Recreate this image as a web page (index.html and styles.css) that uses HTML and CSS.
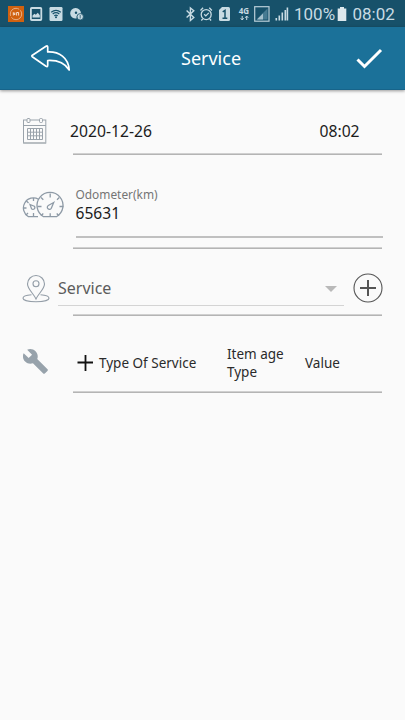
FILE: index.html
```html
<!DOCTYPE html>
<html lang="en">
<head>
<meta charset="utf-8">
<title>Service</title>
<link rel="stylesheet" href="styles.css">
</head>
<body>
<div class="status">
  <svg class="status-left" width="90" height="27" viewBox="0 0 90 27">
    <rect x="8" y="6" width="16" height="16" fill="#d0610f"/>
    <circle cx="16" cy="14" r="5.7" fill="none" stroke="#e6ad83" stroke-width="1" stroke-dasharray="14 1.5"/>
    <path d="M13.3 15.5v-3l1.500 2.500v-2.500M16.600 15.500v-3h2v3" fill="none" stroke="#f5dccb" stroke-width="1"/>
    <rect x="30.900" y="8" width="10.400" height="12" rx=".8" fill="none" stroke="#c8dbe3" stroke-width="1.800"/>
    <path d="M32.500 17.500v-2l2-1.800 1.300 1 2-2 2 2.500v2.300z" fill="#c8dbe3"/>
    <rect x="49.500" y="7" width="13" height="14" rx="1.200" fill="#c8dbe3"/>
    <path d="M51.200 12.200q4.800-3.800 9.600 0M52.700 14q3.300-2.600 6.600 0M54.300 15.800q1.700-1.300 3.400 0" fill="none" stroke="#17516a" stroke-width="1.200"/>
    <circle cx="56" cy="17.300" r="1" fill="#17516a"/>
    <path d="M75.500 8a5.300 5.300 0 1 0 1 10.500l.5-3 4-1.700A5.300 5.300 0 0 0 75.500 8z" fill="#c8dbe3"/>
    <circle cx="76" cy="12.700" r="1.200" fill="#17516a"/>
    <circle cx="80.200" cy="16.800" r="3.200" fill="#c8dbe3" stroke="#17516a" stroke-width=".8"/>
    <path d="M80.200 15v3.500" fill="none" stroke="#477387" stroke-width="1"/>
  </svg>
  <svg class="status-right" width="108" height="27" viewBox="184 0 108 27">
    <path d="M186.600 10.600l7.200 6.800-3.400 3V8l3.400 2.800-7.200 6.800" fill="none" stroke="#c8dbe3" stroke-width="1.400"/>
    <g fill="none" stroke="#c8dbe3" stroke-width="1.300">
      <circle cx="206.200" cy="14.600" r="5"/>
      <path d="M200.500 10.500l2.600-2.700M211.900 10.500l-2.600-2.700M202.700 19l-1.400 1.500M209.700 19l1.400 1.500M204.200 14.200l1.600 1.700 3-3"/>
    </g>
    <path d="M222 7h6.500q1.500 0 1.500 1.500v11q0 1.500-1.500 1.500h-8q-1.500 0-1.500-1.500V10z" fill="#c8dbe3"/>
    <path d="M222.700 11.800l2.300-1.400v7.800M222.500 18.200h4.800" fill="none" stroke="#17516a" stroke-width="1.500"/>
    <text class="net" x="238.700" y="13.900">4G</text>
    <path d="M242.200 16v4M240.700 18.200l1.500 1.800 1.500-1.800M246.700 20v-4M245.200 17.800l1.500-1.800 1.500 1.800" fill="none" stroke="#c8dbe3" stroke-width="1"/>
    <rect x="254.700" y="6.700" width="14.300" height="14.500" fill="none" stroke="#b9cfd9" stroke-width="1.200"/>
    <path d="M256.500 19.500L267.500 8.500v11z" fill="#477b92"/>
    <path d="M257 19.500l6-6v6z" fill="#a6c1cd"/>
    <path d="M276.300 20.500v-2.500M279.300 20.500v-5M282.300 20.500v-8M285.300 20.500v-10.500M287.400 20.500V7.500" fill="none" stroke="#c8dbe3" stroke-width="1.600"/>
  </svg>
  <span class="percent">100%</span>
  <svg class="battery" width="10" height="15" viewBox="0 0 10 15"><path d="M3 0h4v1.500h2.300V14H.7V1.500H3z" fill="#dce8ed"/></svg>
  <span class="clock">08:02</span>
</div>
<header class="bar">
  <svg class="back" width="42" height="32" viewBox="0 0 42 32"><path d="M2 13.500L16 4.200q1.700-1 1.700 1V10C29 9.500 38.500 15.500 39.200 28 34.500 20.500 28 18 17.700 18.500v4.800q0 2-1.700 1L2.300 14.700q-.8-.6-.3-1.200z" fill="none" stroke="#fff" stroke-width="1.700" stroke-linejoin="round"/></svg>
  <h1 class="title">Service</h1>
  <svg class="check" width="30" height="24" viewBox="0 0 30 24"><path d="M3.500 13.500l7 7L27 4" fill="none" stroke="#fff" stroke-width="3"/></svg>
</header>
<main>
  <section class="row date-row">
    <svg class="icon" width="28" height="30" viewBox="0 0 28 30" fill="none" stroke="#9aa3ab" stroke-width="1">
      <rect x="1.500" y="4" width="22.300" height="23"/><path d="M1.500 9.500h22.300"/><path d="M1.500 27h22.500" stroke="#b0b6bb" stroke-width="1.400"/>
      <rect x="5" y="2.500" width="3" height="4" rx="1" fill="#fafafa"/><rect x="17.500" y="2.500" width="3" height="4" rx="1" fill="#fafafa"/>
      <path d="M5.500 12.500h15v11h-15zM5.500 16.200h15M5.500 19.800h15M8.500 12.500v11M11.500 12.500v11M14.500 12.500v11M17.500 12.500v11"/>
    </svg>
    <span class="date">2020-12-26</span><span class="time">08:02</span>
  </section>
  <section class="row odo-row">
    <svg class="icon" width="44" height="30" viewBox="0 0 44 30" fill="none" stroke="#8e9aa6" stroke-width="1.300">
      <path d="M16.500 8.200A9.800 9.800 0 1 0 6.500 25.700H16"/>
      <path d="M21.500 25.700A13 13 0 1 1 34.500 25.700z"/>
      <path d="M11.500 7v3M4.500 10l2 2M1.500 17h3M4 24l2-2M11.500 25v-3M28.200 2.500v4M19 6.500l2.300 2.300M15.500 15.500h4M37.500 15.500h4M37.300 6.500L35 8.800M19 24.800l2.300-2.300M37 24.800l-2.300-2.300M28.200 25.500v-3.300"/>
      <path d="M8 13.500l4.300 1.700a1.900 1.900 0 1 1-2.700 2.700zM31.700 11.500l-5.400 3a2.100 2.100 0 1 0 3 2.700z"/>
    </svg>
    <div class="odo-field"><label class="odo-label">Odometer(km)</label><div class="odo-value">65631</div></div>
  </section>
  <section class="row place-row">
    <svg class="icon" width="28" height="30" viewBox="0 0 28 30" fill="none" stroke="#939da7" stroke-width="1.100">
      <path d="M14 25C11.500 19.500 5.500 15 5.500 10a8.500 8.500 0 0 1 17 0c0 5-6 9.500-8.500 15z"/><circle cx="14" cy="9.800" r="3"/>
      <path d="M9.500 20.800C4.500 21.200 1 22.600 1 24.200c0 2 5.800 3.500 13 3.500s13-1.500 13-3.500c0-1.600-3.500-3-8.500-3.400"/>
    </svg>
    <div class="select"><span>Service</span><svg width="12" height="6" viewBox="0 0 12 6"><path d="M0 0h12L6 6z" fill="#b9b9b9"/></svg></div>
    <svg class="add" width="30" height="30" viewBox="0 0 30 30" fill="none" stroke="#555"><circle cx="15" cy="15" r="14" stroke-width="1.100"/><path d="M15 7v16M7 15h16" stroke-width="2"/></svg>
  </section>
  <section class="row type-row">
    <svg class="icon" width="26" height="26" viewBox="1 1 23 23"><path fill="#97a2ab" d="M22.700 19l-9.100-9.100c.9-2.300.4-5-1.500-6.900-2-2-5-2.400-7.400-1.300L9 6 6 9 1.600 4.700C.4 7.100.9 10.100 2.900 12.100c1.900 1.900 4.600 2.400 6.900 1.500l9.100 9.100c.4.4 1 .4 1.400 0l2.300-2.300c.5-.4.5-1.100.1-1.400z"/></svg>
    <svg class="plus" width="16" height="16" viewBox="0 0 16 16"><path d="M8.500 0v16M.5 7.500h16" stroke="#111" stroke-width="1.800"/></svg>
    <span class="type">Type Of Service</span>
    <span class="age">Item age<br>Type</span>
    <span class="value">Value</span>
  </section>
</main>
</body>
</html>
```
FILE: styles.css
```css
* { box-sizing: border-box; }
body {
  margin: 0;
  height: 720px;
  overflow: hidden;
  background: #fafafa;
  color: #2a2a2a;
  font-family: "Noto Sans", sans-serif;
}
svg { display: block; flex: none; }
span { white-space: nowrap; }
.status {
  height: 27px;
  display: flex;
  background: #17516a;
  color: #c8dbe3;
  font: 17px/29px Roboto, sans-serif;
}
.status-right { margin-left: 94px; }
.net { font: bold 8px "Noto Sans", sans-serif; fill: #c8dbe3; }
.percent { width: 42px; margin-left: 2px; }
.battery { margin: 7px 0 0 1px; }
.clock { margin-left: 5.500px; }
.bar {
  height: 63px;
  display: flex;
  align-items: center;
  background: #1b7199;
  border-bottom: 1px solid #17648a;
  box-shadow: 0 1px 3px rgba(0, 0, 0, .4);
  color: #fff;
}
.back { margin-left: 30px; }
.title { margin: 0 0 0 109px; width: 61px; font-size: 18px; font-weight: 400; line-height: 26px; }
.check { margin-left: 112px; }
.row { position: relative; display: flex; align-items: flex-start; }
.row::after {
  content: "";
  position: absolute;
  left: 73px;
  right: 23px;
  bottom: 0;
  height: 2px;
  background: linear-gradient(#d0d0d0 50%, #b4b4b4 50%);
}
.icon { margin-left: 22px; }
.date-row { height: 65px; padding-top: 26px; font-size: 15.700px; line-height: 30px; color: #1c1c1c; }
.date-row .icon { margin-top: 0; }
.date { margin-left: 20px; width: 249.500px; }
.odo-row { height: 94px; padding-top: 31px; }
.odo-row .icon { margin-top: 5px; }
.odo-field { margin-left: 9.500px; width: 307px; height: 52px; border-bottom: 2px solid #c0c0c0; }
.odo-label { display: block; font-size: 11.900px; line-height: 17px; color: #757575; }
.odo-value { font-size: 15.600px; line-height: 20px; color: #1c1c1c; }
.place-row { height: 67px; padding-top: 24px; }
.place-row .icon { margin-top: 1px; }
.select {
  width: 286px;
  height: 33px;
  margin-left: 8px;
  padding-right: 7px;
  display: flex;
  justify-content: space-between;
  align-items: center;
  border-bottom: 1px solid #d4d4d4;
  font-size: 16px;
  line-height: 30px;
  color: #5c5c5c;
}
.select span { padding-bottom: 2px; }
.add { margin-left: 9px; }
.type-row { height: 77px; padding-top: 24px; font-size: 13.500px; line-height: 18px; }
.type-row .icon { margin: 9px 0 0 23px; }
.plus { margin: 15px 0 0 28px; }
.type { margin: 14px 0 0 6px; width: 128px; }
.age { width: 78px; margin-top: 5px; }
.value { margin-top: 14px; }
```
